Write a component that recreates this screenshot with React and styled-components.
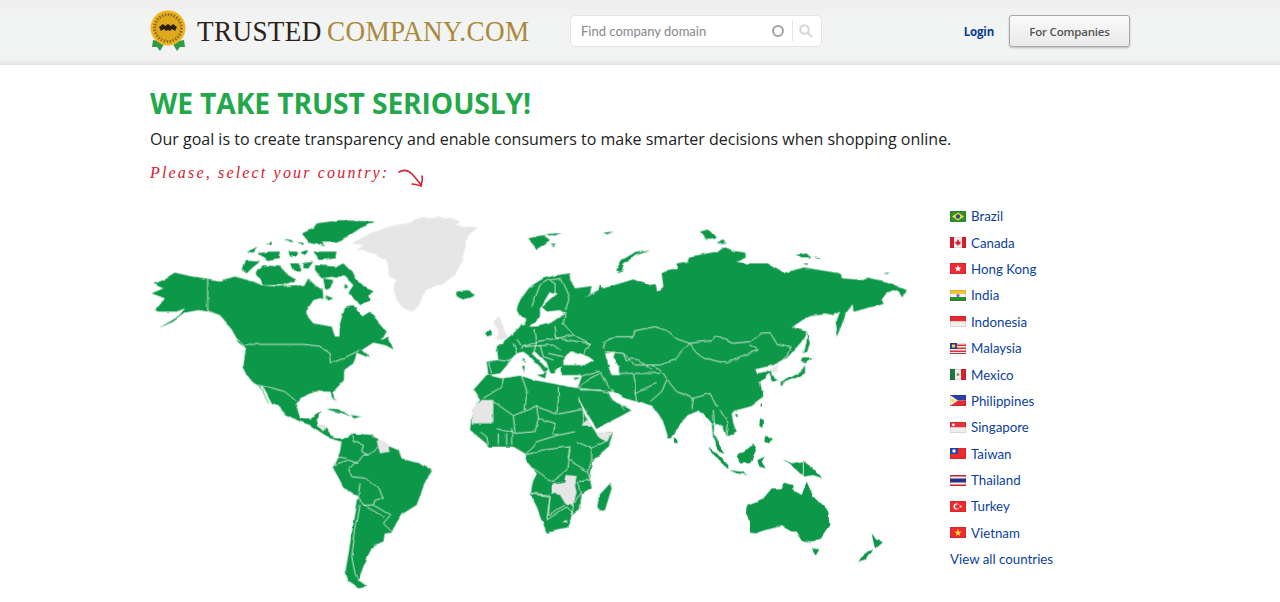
import React from "react";
import styled, { createGlobalStyle } from "styled-components";

const GlobalStyle = createGlobalStyle`
  html, body {
    margin: 0;
    padding: 0;
    background: #fff;
    overflow: hidden;
    font-family: "Open Sans", sans-serif;
  }
`;

const Header = styled.header`
  height: 65px;
  background: linear-gradient(#eeeeee, #f2f3f3 30%, #f2f3f3 90%, #e4e4e4);
`;

const Container = styled.div`
  width: 980px;
  margin: 0 auto;
`;

const HeaderInner = styled(Container)`
  display: flex;
  align-items: flex-start;
  height: 65px;
`;

const Logo = styled.a`
  display: flex;
  align-items: center;
  width: 420px;
  height: 42px;
  margin-top: 10px;
`;

const LogoText = styled.span`
  display: inline-block;
  margin: 0 ${(p) => p.$after}px 0 ${(p) => p.$before}px;
  font-family: "Liberation Serif", serif;
  font-size: 30px;
  line-height: 42px;
  letter-spacing: 0.4px;
  color: ${(p) => p.$color};
  transform: scaleX(0.905);
  transform-origin: left center;
`;

const Search = styled.div`
  display: flex;
  align-items: center;
  box-sizing: border-box;
  width: 252px;
  height: 32px;
  margin-top: 15px;
  padding: 0 8px 0 10px;
  background: #fff;
  border: 1px solid #e3e4e4;
  border-radius: 5px;
`;

const SearchInput = styled.input`
  flex: 1;
  min-width: 0;
  border: 0;
  outline: 0;
  padding: 0;
  background: transparent;
  font-family: Lato, sans-serif;
  font-size: 13px;
  &::placeholder {
    color: #85878a;
    opacity: 1;
  }
`;

const Spinner = styled.span`
  width: 8px;
  height: 8px;
  border: 2px solid #a2a3a3;
  border-radius: 50%;
`;

const SearchDivider = styled.span`
  width: 1px;
  height: 20px;
  margin: 0 6px 0 8px;
  background: #e4e4e4;
`;

const HeaderLinks = styled.div`
  display: flex;
  align-items: center;
  margin-left: auto;
  margin-top: 15px;
`;

const Login = styled.a`
  font-size: 11.5px;
  font-weight: 700;
  letter-spacing: -0.2px;
  color: #0b3d91;
`;

const CompanyButton = styled.button`
  width: 121px;
  height: 32px;
  margin-left: 15px;
  padding: 0;
  border: 1px solid #a9a9a9;
  border-radius: 3px;
  background: linear-gradient(#fafafa, #e9e9e9);
  box-shadow: 0 1px 2px rgba(0, 0, 0, 0.25);
  font-family: "Open Sans", sans-serif;
  font-size: 11.5px;
  font-weight: 600;
  letter-spacing: -0.2px;
  color: #555;
`;

const Title = styled.h1`
  margin: 20px 0 0;
  font-size: 28.2px;
  line-height: 36px;
  font-weight: 700;
  letter-spacing: -0.1px;
  color: #22a84b;
`;

const Goal = styled.p`
  margin: 4px 0 0;
  font-size: 16px;
  line-height: 28px;
  color: #222;
`;

const Hint = styled.div`
  display: flex;
  align-items: flex-start;
  height: 47px;
  margin-top: 10px;
  font-family: "Liberation Serif", serif;
  font-style: italic;
  font-size: 16px;
  line-height: 20px;
  letter-spacing: 2.17px;
  color: #d4202f;
`;

const HintArrow = styled.svg`
  margin: 5px 0 0 9px;
`;

const Columns = styled.div`
  display: flex;
  gap: 20px;
`;

const WorldMap = styled.svg`
  flex: none;
  display: block;
`;

const CountryList = styled.ul`
  list-style: none;
  margin: -7px 0 0;
  padding: 0;
  font-family: Lato, sans-serif;
  font-size: 13.3px;
`;

const CountryRow = styled.li`
  display: flex;
  align-items: center;
  height: 26.4px;
  gap: 5px;
  color: #0b3f9c;
`;

const FlagBox = styled.svg`
  display: block;
  flex: none;
`;

const AllCountries = styled.a`
  display: block;
  line-height: 26px;
  color: #0b3f9c;
`;

// map outlines, coordinates are 3x the page pixels
const northAmerica = {
  land: [
    "40,222 70,235 35,250 75,265 45,300 55,305 110,305 135,295 115,320 55,355 100,335 135,308 175,300 205,305 240,315 270,350 290,385 318,410 310,470 330,510 355,525 385,580 420,590 430,610 480,635 510,645 555,675 585,690 605,695 605,685 585,685 570,670 555,650 535,645 530,630 545,605 510,625 480,625 470,590 480,565 525,545 570,545 590,575 580,545 612,510 612,480 640,460 650,428 690,445 665,420 700,398 735,405 760,418 745,380 725,390 740,365 690,305 665,320 640,285 615,290 600,340 598,380 585,380 575,350 520,340 495,310 520,270 550,262 548,240 525,225 505,205 490,232 470,225 410,230 365,225 340,215 285,200 240,212 200,206 150,198 105,188 70,208",
    "485,70 520,55 530,40 600,30 705,35 660,55 600,95 545,95 555,110 530,100 505,95",
    "520,125 590,125 585,145 540,150",
    "320,125 355,110 340,128",
    "355,130 385,125 420,125 415,145 380,150",
    "445,125 475,125 470,140 450,140",
    "430,88 460,95 455,100",
    "380,100 395,95 395,105",
    "472,95 490,100 485,105",
    "483,120 505,122 495,135 485,130",
    "305,180 315,152 360,155 335,175 320,190",
    "345,185 370,165 420,170 445,195 470,210 430,225 370,225 360,205 345,195",
    "450,160 480,160 480,185 460,185",
    "490,160 520,155 505,175 490,175",
    "525,165 590,170 610,160 640,190 665,225 700,240 685,260 690,275 660,285 640,260 625,250 640,225 615,200 580,200 545,205 525,185",
    "550,205 580,210 570,235 555,240",
    "555,255 580,265 565,272",
    "610,225 625,230 615,240",
    "945,245 985,240 1008,255 975,270 955,262",
    "1035,370 1055,355 1055,375 1040,380",
    "285,390 300,395 315,412",
    "560,598 600,600 585,605",
  ],
  grey: [
    "635,100 690,70 760,45 800,40 830,25 930,22 960,35 950,45 1015,52 985,75 975,115 965,155 945,195 920,215 860,240 830,295 815,305 790,295 770,270 760,230 770,210 750,200 740,150 700,130 650,120 670,105",
    "1060,335 1075,320 1085,345 1105,385 1065,390 1075,365",
  ],
  water: ["360,530 368,530 400,590 392,590"],
  lines: [
    "203,206 203,302 235,315 270,350",
    "318,403 490,403 535,408 570,430 575,460 620,440 660,420",
    "355,525 400,535 435,545 470,575",
  ],
};

const eurasia = {
  dx: 1140,
  dy: 0,
  land: [
    "-70,410 -50,395 -20,370 0,350 10,325 0,318 -10,300 0,270 30,230 70,205 110,195 150,190 150,208 165,235 215,228 210,250 195,262 235,240 240,222 250,235 300,220 340,208 385,225 410,222 415,245 430,230 425,190 435,185 470,178 470,160 505,155 510,140 590,125 610,110 640,122 675,128 678,140 650,152 680,160 740,160 775,180 790,190 850,172 960,190 970,205 1030,210 1040,203 1100,215 1160,240 1150,262 1130,240 1100,250 1085,265 1090,282 1000,305 998,282 975,315 965,345 950,380 945,345 960,305 940,315 915,310 870,315 815,352 860,365 845,395 800,445 760,465 740,470 705,478 715,490 755,480 750,490 775,510 760,515 745,490 735,505 720,515 730,560 715,570 690,590 650,600 635,610 640,640 650,665 620,680 610,650 595,640 585,640 580,670 615,730 600,725 580,690 575,640 560,620 550,610 530,605 500,615 480,645 455,685 445,685 430,635 410,605 395,590 350,575 315,565 280,545 262,545 275,570 305,585 335,600 300,620 240,650 230,655 195,600 165,545 175,530 185,500 180,495 125,495 125,470 105,480 105,490 90,490 80,460 45,425 35,430 65,460 85,480 75,490 60,470 30,440 10,425 -10,430 -25,445 -30,455 -60,490 -95,495 -100,455 -65,450",
    "25,85 70,75 90,90 50,118",
    "70,72 125,70 105,80",
    "92,100 108,102 100,108",
    "250,68 280,65 262,73",
    "285,185 305,150 340,130 390,120 340,140 310,165 305,190",
    "540,65 565,58 590,85 560,90",
    "590,100 610,85 622,98",
    "828,135 860,130 875,145 840,145",
    "885,140 908,143 895,146",
    "850,160 865,160 860,165",
    "1090,190 1110,187 1100,192",
    "860,365 870,400 860,425 850,430 860,395",
    "850,445 878,445 855,460 845,455",
    "855,465 855,490 825,505 790,520 785,530 780,520 825,495 845,480",
    "8,445 14,445 12,462",
    "6,470 14,470 12,490",
    "50,495 80,490 75,505",
    "160,503 178,503 165,510",
  ],
  water: [
    "130,450 150,425 165,425 205,440 222,452 200,465 130,465",
    "255,430 285,425 280,445 300,475 300,495 275,495 265,465",
    "30,350 50,350 90,340 135,310 120,300 80,305 65,290 110,250 90,245 60,295 60,320 35,345",
    "-5,318 15,325 15,345 5,345",
  ],
  grey: ["745,480 775,460 770,485 755,490"],
  lines: [
    "250,415 255,395 285,380 340,380 345,362 405,350 440,362 465,385 510,400 575,392 585,378 640,400 690,395 720,370 750,368 770,400 810,410 800,440 785,455",
    "510,400 530,430 560,445 620,460 660,440 715,420 690,405",
    "510,400 480,430 465,450 420,465 395,465 430,490 450,520 470,545 520,565 570,550 590,590",
    "255,425 310,430 345,465 395,465",
    "310,430 320,455 335,440 375,465 395,480",
    "240,480 265,530 280,545",
    "290,490 340,490 345,515 345,545 350,575",
    "340,490 375,490 420,490",
    "410,520 345,548",
    "440,510 425,545 390,575",
    "180,500 240,480",
    "240,490 200,510 175,535 265,545",
    "180,540 240,540",
    "0,415 50,395 110,385 160,375",
    "45,360 50,395 40,430",
    "105,345 110,385",
    "130,340 160,375 210,400 190,435",
    "110,385 210,400",
    "5,410 100,405 120,420",
    "60,405 70,440 100,450",
    "85,430 130,440",
    "35,290 60,225 85,210 105,220 105,250",
    "85,210 125,205 150,265 135,300",
    "135,310 130,340",
    "-65,450 -30,455",
    "-95,455 -85,490",
    "-20,400 -10,430",
    "-10,385 5,410",
    "520,565 515,600",
    "545,610 560,650 585,640",
    "580,600 585,680",
    "600,600 625,640 620,680",
    "310,600 300,575",
  ],
};

const southAtlantic = {
  dx: 420,
  dy: 570,
  land: [
    "185,120 215,100 275,105 300,125 355,150 365,175 420,190 455,210 430,260 410,315 370,340 340,385 335,398 315,400 310,425 280,435 265,465 250,500 235,540 262,560 235,565 205,545 197,510 205,465 215,400 230,320 235,290 190,260 160,205 180,155",
    "140,25 175,28 215,50 170,35",
    "215,45 245,50 225,55",
    "580,-30 620,-75 665,-65 720,-73 760,-60 840,-45 895,-35 895,0 925,65 950,100 1000,95 985,140 940,180 930,235 935,265 905,280 900,330 875,350 860,385 800,398 785,360 770,320 752,285 770,220 745,190 735,160 700,140 630,140 570,90 575,40 600,0",
    "990,250 995,265 975,330 960,335 952,320 958,285",
  ],
  water: [],
  grey: [
    "575,30 605,0 640,0 640,70 575,70",
    "945,100 1000,95 980,125 960,115",
    "905,80 920,58 935,80",
    "815,250 855,245 860,225 890,228 885,255 890,280 880,315 855,310 840,285 815,280",
    "290,125 305,120 330,135 330,155 300,160",
    "110,75 140,75 130,95",
    "870,340 880,340 875,350",
  ],
  white: ["848,365 862,360 858,372"],
  lines: [
    "215,100 220,125 250,135 245,155 265,165 295,140",
    "265,165 250,165 235,185 205,205 215,230 260,235 295,265 310,295 285,300 280,315 330,345 310,370 335,395",
    "160,195 205,180 235,190",
    "240,250 235,290 250,315 280,315",
    "240,315 225,400 215,470 225,520 235,545",
    "250,315 310,350",
    "170,170 200,175",
    "640,5 700,47 770,20 830,42 835,0",
    "700,47 705,100 650,85",
    "770,20 775,55 765,95 705,100",
    "775,55 825,70 820,100 835,105 770,125",
    "835,42 910,28 910,80",
    "885,95 835,105",
    "890,125 935,145 985,120",
    "935,145 935,180 925,215",
    "870,150 865,180 925,215 930,240 895,245",
    "790,150 870,140 860,210 815,245 760,205",
    "760,205 755,280 810,285",
    "755,282 810,288 800,360",
    "810,290 805,345 855,315",
    "800,360 860,320 880,340",
    "890,245 905,275 880,315 875,345",
    "600,95 620,110 625,135",
    "655,100 655,135",
    "680,100 680,135",
    "695,85 695,135",
    "770,125 735,165 790,150",
    "670,-65 665,-40 610,-5",
    "725,-70 740,-30 735,30",
    "835,-40 835,0",
  ],
};

const australasia = {
  dx: 1380,
  dy: 570,
  land: [
    "440,315 490,295 515,265 545,265 555,248 580,255 580,270 605,285 620,245 640,290 685,335 688,375 665,410 635,428 610,425 590,395 575,395 545,378 495,390 465,400 450,398 450,365 438,340",
    "635,445 658,448 648,465",
    "815,400 830,420 848,425 825,445 820,425",
    "820,448 800,480 775,488 795,460",
    "548,178 575,190 610,183 640,205 668,235 640,225 610,230 590,210 565,190",
    "408,165 445,145 460,130 468,150 450,190 420,190",
    "322,140 345,155 385,195 385,208 355,180",
    "388,210 420,215 445,225 410,220",
    "472,180 495,170 485,185 497,205 478,200",
    "480,55 492,60 490,85 478,78",
    "495,110 518,115 510,133 493,125",
    "222,112 233,118 232,130 222,128",
    "408,42 417,42 412,52",
    "482,10 488,10 482,25",
    "345,125 358,130 375,160 362,155",
  ],
  water: [],
  grey: [],
  lines: ["610,185 610,230"],
};

const regions = [northAmerica, eurasia, southAtlantic, australasia];

const flags = {
  Brazil: (
    <>
      <rect width="16" height="11" fill="#2f8f35" />
      <polygon points="8,1.5 14,5.5 8,9.5 2,5.5" fill="#f5dc2a" />
      <circle cx="8" cy="5.5" r="2.2" fill="#27509b" />
    </>
  ),
  Canada: (
    <>
      <rect width="16" height="11" fill="#f4eeee" />
      <rect width="4" height="11" fill="#d81e2a" />
      <rect x="12" width="4" height="11" fill="#d81e2a" />
      <polygon points="8,2 9.5,5 11,4.5 10,7.5 8.4,7.5 8.4,9 7.6,9 7.6,7.5 6,7.5 5,4.5 6.5,5" fill="#d81e2a" />
    </>
  ),
  "Hong Kong": (
    <>
      <rect width="16" height="11" fill="#ee2a35" />
      <polygon points="8,2 9,4.5 11.3,4.6 9.5,6.2 10.2,8.6 8,7.2 5.8,8.6 6.5,6.2 4.7,4.6 7,4.5" fill="#fff" />
    </>
  ),
  India: (
    <>
      <rect width="16" height="4" fill="#f6c23c" />
      <rect y="4" width="16" height="3" fill="#f3f3f3" />
      <rect y="7" width="16" height="4" fill="#2c8f34" />
      <circle cx="8" cy="5.5" r="1.5" fill="#5a6fb0" />
    </>
  ),
  Indonesia: (
    <>
      <rect width="16" height="5.5" fill="#e62a32" />
      <rect y="5.5" width="16" height="5.5" fill="#f0eeee" />
    </>
  ),
  Malaysia: (
    <>
      <rect width="16" height="11" fill="#f3f0f0" />
      <rect y="1.5" width="16" height="1.5" fill="#d6343c" />
      <rect y="4.5" width="16" height="1.5" fill="#d6343c" />
      <rect y="7.5" width="16" height="1.5" fill="#d6343c" />
      <rect y="10" width="16" height="1" fill="#d6343c" />
      <rect width="7" height="6" fill="#2b3f96" />
      <circle cx="3.5" cy="3" r="1.8" fill="#f4d63a" />
    </>
  ),
  Mexico: (
    <>
      <rect width="16" height="11" fill="#f1eeee" />
      <rect width="5" height="11" fill="#1d7a3c" />
      <rect x="11" width="5" height="11" fill="#d5222c" />
      <circle cx="8" cy="5.5" r="1.5" fill="#8f9a6a" />
    </>
  ),
  Philippines: (
    <>
      <rect width="16" height="5.5" fill="#2a3fa8" />
      <rect y="5.5" width="16" height="5.5" fill="#e62a32" />
      <polygon points="0,0 8,5.5 0,11" fill="#f7f3cf" />
      <circle cx="2.6" cy="5.5" r="1.3" fill="#f2d52e" />
    </>
  ),
  Singapore: (
    <>
      <rect width="16" height="5.5" fill="#ea3038" />
      <rect y="5.5" width="16" height="5.5" fill="#f0eeee" />
      <circle cx="3.5" cy="2.8" r="1.4" fill="#fff" />
    </>
  ),
  Taiwan: (
    <>
      <rect width="16" height="11" fill="#ee2a2f" />
      <rect width="8" height="6" fill="#2346ad" />
      <circle cx="4" cy="3" r="1.7" fill="#fff" />
    </>
  ),
  Thailand: (
    <>
      <rect width="16" height="11" fill="#f3f0f0" />
      <rect width="16" height="1.5" fill="#e2232c" />
      <rect y="9.5" width="16" height="1.5" fill="#e2232c" />
      <rect y="3.5" width="16" height="4" fill="#2d2f86" />
    </>
  ),
  Turkey: (
    <>
      <rect width="16" height="11" fill="#ee2a2f" />
      <circle cx="6.5" cy="5.5" r="3" fill="#fff" />
      <circle cx="7.4" cy="5.5" r="2.3" fill="#ee2a2f" />
      <circle cx="10.6" cy="5.5" r="1" fill="#fff" />
    </>
  ),
  Vietnam: (
    <>
      <rect width="16" height="11" fill="#ee2a2f" />
      <polygon points="8,2 9,4.7 11.6,4.7 9.5,6.4 10.2,9 8,7.4 5.8,9 6.5,6.4 4.4,4.7 7,4.7" fill="#fbe03a" />
    </>
  ),
};

const Flag = ({ name }) => (
  <FlagBox width="16" height="11" viewBox="0 0 16 11">
    {flags[name]}
    <rect x="0.25" y="0.25" width="15.5" height="10.5" fill="none" stroke="rgba(0,0,0,0.18)" strokeWidth="0.5" />
  </FlagBox>
);

const Medal = () => (
  <svg width="37" height="42" viewBox="0 0 37 42">
    <polygon points="3,30 14,32 13,36 10,41 7,37 2,37" fill="#2f9a45" />
    <polygon points="34,30 23,32 24,36 27,41 30,37 35,37" fill="#2f9a45" />
    <circle cx="18" cy="18" r="17.5" fill="#eeb422" />
    <circle cx="18" cy="18" r="13.5" fill="#e0a81c" stroke="#8a6a1c" strokeDasharray="1.5 1.5" strokeWidth="3" />
    <path d="M9 17l4-3 2 2 3-2 3 2 2-2 4 3-2 4-3-2-2 2-2-1-2 1-2-2-3 2z" fill="#2a2018" />
  </svg>
);

const App = () => (
  <>
    <GlobalStyle />
    <Header>
      <HeaderInner>
        <Logo>
          <Medal />
          <LogoText $color="#2b2118" $before={10} $after={-8}>TRUSTED</LogoText>
          <LogoText $color="#a98a3b" $before={0} $after={0}>COMPANY.COM</LogoText>
        </Logo>
        <Search>
          <SearchInput placeholder="Find company domain" />
          <Spinner />
          <SearchDivider />
          <svg width="14" height="14" viewBox="0 0 14 14" fill="none" stroke="#d4d6d6" strokeWidth="2">
            <circle cx="5.5" cy="5.5" r="4.2" />
            <path d="M8.5 8.5l4.5 4.5" />
          </svg>
        </Search>
        <HeaderLinks>
          <Login>Login</Login>
          <CompanyButton>For Companies</CompanyButton>
        </HeaderLinks>
      </HeaderInner>
    </Header>
    <Container>
      <Title>WE TAKE TRUST SERIOUSLY!</Title>
      <Goal>Our goal is to create transparency and enable consumers to make smarter decisions when shopping online.</Goal>
      <Hint>
        Please, select your country:
        <HintArrow width="28" height="20" viewBox="0 0 28 20" fill="none" stroke="#d4202f" strokeWidth="1.6" strokeLinecap="round">
          <path d="M1 4c5-3 9-2 13 2s6 7 9 11" />
          <path d="M24 8c1 3 0 6-1 10-3-1-6-2-9-2" />
        </HintArrow>
      </Hint>
      <Columns>
        <WorldMap width="780" height="390" viewBox="30 0 2340 1170">
          <defs>
            <filter id="coast" x="0" y="0" width="2400" height="1170" filterUnits="userSpaceOnUse" primitiveUnits="userSpaceOnUse">
              <feTurbulence type="fractalNoise" baseFrequency="0.03" numOctaves="2" seed="4" result="noise" />
              <feDisplacementMap in="SourceGraphic" in2="noise" scale="10" xChannelSelector="R" yChannelSelector="G" />
            </filter>
          </defs>
          <g filter="url(#coast)">
            {regions.map((r, i) => (
              <g key={i} transform={`translate(${r.dx || 0} ${r.dy || 0})`}>
                {r.land.map((p) => (
                  <polygon key={p} points={p} fill="#0f9748" />
                ))}
                {r.water.map((p) => (
                  <polygon key={p} points={p} fill="#fff" />
                ))}
                {r.grey.map((p) => (
                  <polygon key={p} points={p} fill="#e6e6e6" />
                ))}
                {(r.white || []).map((p) => (
                  <polygon key={p} points={p} fill="#fff" />
                ))}
                {r.lines.map((p) => (
                  <polyline key={p} points={p} fill="none" stroke="#dcefe2" strokeWidth="2.8" />
                ))}
              </g>
            ))}
          </g>
        </WorldMap>
        <CountryList>
          {Object.keys(flags).map((name) => (
            <CountryRow key={name}>
              <Flag name={name} />
              {name}
            </CountryRow>
          ))}
          <li>
            <AllCountries>View all countries</AllCountries>
          </li>
        </CountryList>
      </Columns>
    </Container>
  </>
);

export default App;
